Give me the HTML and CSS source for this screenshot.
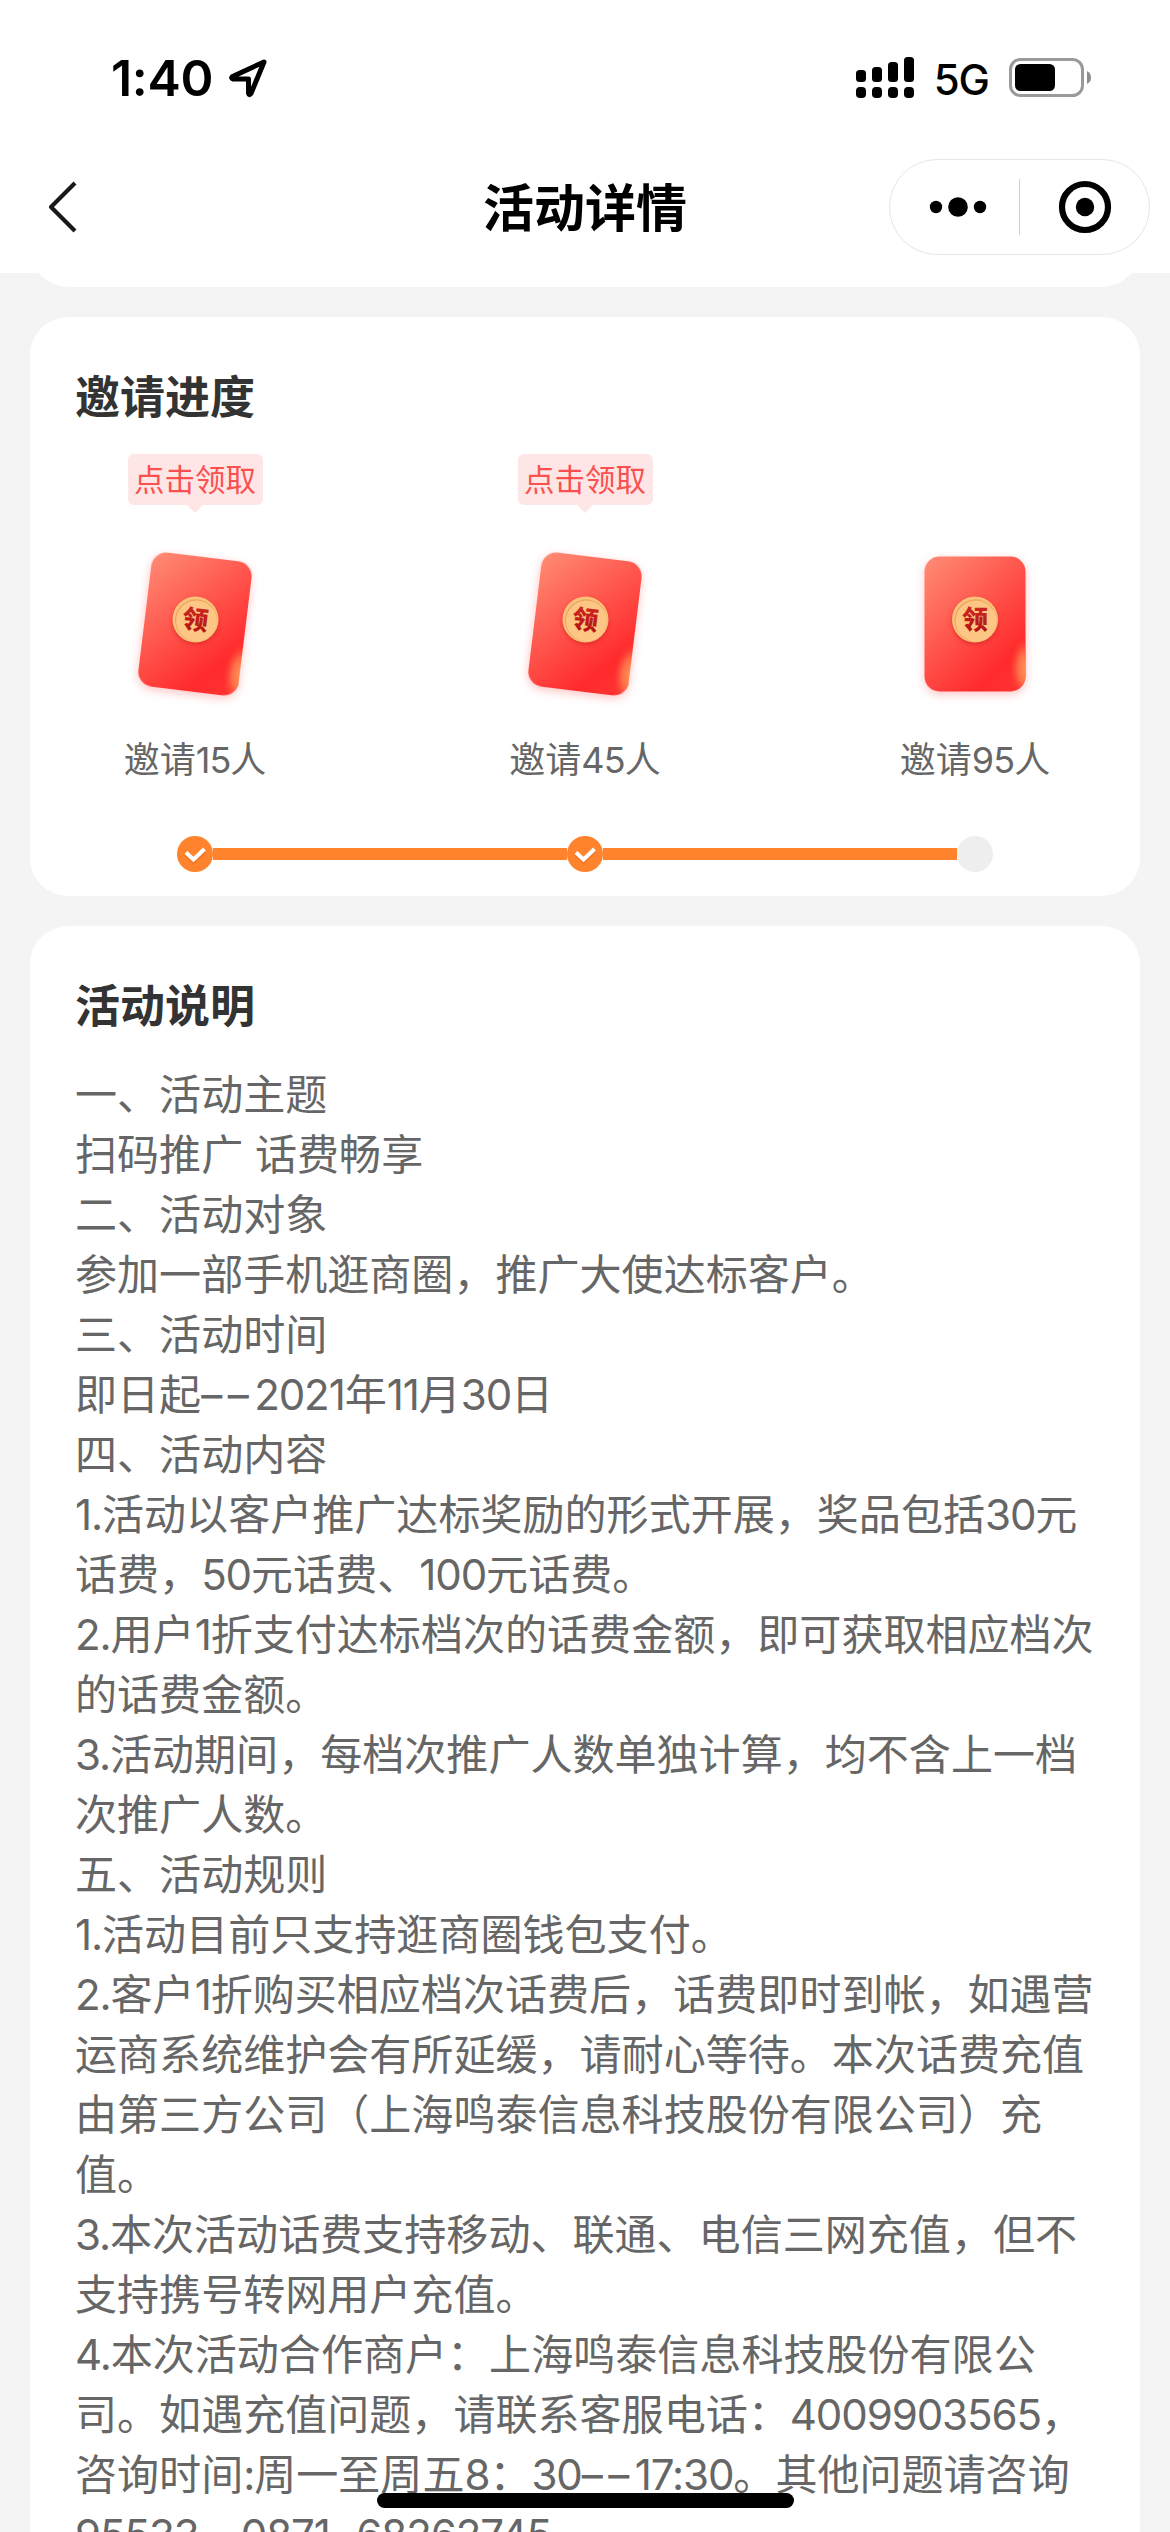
FILE: index.html
```html
<!DOCTYPE html>
<html lang="zh-CN">
<head>
<meta charset="utf-8">
<title>活动详情</title>
<link rel="stylesheet" href="styles.css">
</head>
<body>
<svg class="defs" width="0" height="0" aria-hidden="true">
  <defs>
    <linearGradient id="red" x1="0" y1="0" x2="0.75" y2="1">
      <stop offset="0" stop-color="#ff8d76"/>
      <stop offset="0.45" stop-color="#ff5a50"/>
      <stop offset="0.88" stop-color="#ff2a2c"/>
      <stop offset="1" stop-color="#ff3030"/>
    </linearGradient>
    <radialGradient id="glow" gradientUnits="userSpaceOnUse" cx="0" cy="0" r="1" gradientTransform="translate(102 112) scale(17 32)">
      <stop offset="0" stop-color="#ff9a58"/>
      <stop offset="0.5" stop-color="#ff8250" stop-opacity="0.75"/>
      <stop offset="1" stop-color="#ff4a3a" stop-opacity="0"/>
    </radialGradient>
    <linearGradient id="ink" x1="0" y1="0" x2="0" y2="1">
      <stop offset="0" stop-color="#d02a20"/>
      <stop offset="1" stop-color="#b01010"/>
    </linearGradient>
    <clipPath id="body-shape"><rect width="101" height="135" rx="15"/></clipPath>
    <g id="packet">
      <rect width="101" height="135" rx="15" fill="url(#red)"/>
      <g clip-path="url(#body-shape)"><rect x="80" y="75" width="30" height="70" fill="url(#glow)"/></g>
    </g>
    <g id="coin">
      <circle r="23" fill="#fbc27a"/>
      <circle r="21" cx="0.6" cy="0.8" fill="#e9a45e"/>
      <circle r="20.4" cx="1" cy="1.4" fill="#fdc684"/>
    </g>
  </defs>
</svg>

<div class="screen">
  <header class="header">
    <div class="status">
      <div class="clock">
        <span class="time">1:40</span>
        <svg class="location" width="40" height="40" viewBox="0 0 40 40"><path d="M36 4 4.500 18.500q-2 2 .5 2.500H20.500V35q.5 3 2.500.5z" fill="none" stroke="#000" stroke-width="5" stroke-linejoin="round"/></svg>
      </div>
      <div class="signals">
        <svg class="bars" width="59" height="42" viewBox="0 0 59 42">
          <rect x="0" y="13" width="10" height="12" rx="3.500"/><rect x="16" y="10" width="10" height="15" rx="3.500"/><rect x="32" y="5" width="10" height="20" rx="3.500"/><rect x="48" y="0" width="10" height="25" rx="3.500"/>
          <rect x="0" y="30" width="10" height="11" rx="4"/><rect x="16" y="30" width="10" height="11" rx="4"/><rect x="32" y="30" width="10" height="11" rx="4"/><rect x="48" y="30" width="10" height="11" rx="4"/>
        </svg>
        <span class="network">5G</span>
        <svg class="battery" width="82" height="40" viewBox="0 0 82 40"><rect x="1.500" y="1.500" width="72" height="36" rx="10" fill="#fff" stroke="#9a9a9a" stroke-width="3"/><rect x="6" y="6" width="40" height="27" rx="5.500"/><path d="M78 13q4 2 4 6.500T78 26z" fill="#8d8d8d"/></svg>
      </div>
    </div>
    <nav class="nav">
      <svg class="back" width="30" height="54" viewBox="0 0 30 54"><path d="M27 3 3 27 27 51" fill="none" stroke="#191919" stroke-width="4.200" stroke-linejoin="round"/></svg>
      <h1 class="nav-title">活动详情</h1>
      <div class="capsule">
        <svg class="more" width="58" height="22" viewBox="0 0 58 22"><circle cx="7" cy="11" r="6.200"/><circle cx="29" cy="11" r="9.800"/><circle cx="51" cy="11" r="6.200"/></svg>
        <i class="divider"></i>
        <svg class="close" width="54" height="54" viewBox="0 0 54 54"><circle cx="27" cy="27" r="23" fill="none" stroke="#000" stroke-width="6.200"/><circle cx="27" cy="27" r="9.200"/></svg>
      </div>
    </nav>
  </header>

  <main class="content">
    <section class="card card-previous"></section>

    <section class="card progress-card">
      <h2 class="card-title">邀请进度</h2>
      <div class="rewards">
        <div class="reward">
          <span class="tip">点击领取</span>
          <svg class="packet" width="160" height="175" viewBox="0 0 160 175"><g class="packet-body" transform="rotate(7 80 87) translate(29.500 19.500)"><use href="#packet"/></g><g class="coin" transform="translate(80.500 82.500)"><use href="#coin"/></g><text class="coin-text" x="80.500" y="92" transform="rotate(7 80 82)">领</text></svg>
          <span class="goal">邀请<b class="n">15</b>人</span>
        </div>
        <div class="reward">
          <span class="tip">点击领取</span>
          <svg class="packet" width="160" height="175" viewBox="0 0 160 175"><g class="packet-body" transform="rotate(7 80 87) translate(29.500 19.500)"><use href="#packet"/></g><g class="coin" transform="translate(80.500 82.500)"><use href="#coin"/></g><text class="coin-text" x="80.500" y="92" transform="rotate(7 80 82)">领</text></svg>
          <span class="goal">邀请<b class="n">45</b>人</span>
        </div>
        <div class="reward">
          <svg class="packet" width="160" height="175" viewBox="0 0 160 175"><g class="packet-body" transform="translate(29.500 19.500)"><use href="#packet"/></g><g class="coin" transform="translate(80 82.500)"><use href="#coin"/></g><text class="coin-text" x="80" y="92">领</text></svg>
          <span class="goal">邀请<b class="n">95</b>人</span>
        </div>
      </div>
      <div class="track">
        <svg class="node" width="36" height="36" viewBox="0 0 36 36"><circle cx="18" cy="18" r="18" fill="#ff832c"/><path d="M9 17 16.500 24 27.500 13.500" fill="none" stroke="#d9641a" stroke-opacity=".45" stroke-width="4" transform="translate(0 1.500)"/><path d="M9 16.500 16.500 23.500 27.500 13" fill="none" stroke="#fff" stroke-width="4"/></svg>
        <i class="line"></i>
        <svg class="node" width="36" height="36" viewBox="0 0 36 36"><circle cx="18" cy="18" r="18" fill="#ff832c"/><path d="M9 17 16.500 24 27.500 13.500" fill="none" stroke="#d9641a" stroke-opacity=".45" stroke-width="4" transform="translate(0 1.500)"/><path d="M9 16.500 16.500 23.500 27.500 13" fill="none" stroke="#fff" stroke-width="4"/></svg>
        <i class="line"></i>
        <i class="node node-empty"></i>
      </div>
    </section>

    <section class="card rules-card">
      <h2 class="card-title">活动说明</h2>
      <div class="rules">
        <p>一、活动主题</p>
        <p>扫码推广 话费畅享</p>
        <p>二、活动对象</p>
        <p>参加一部手机逛商圈，推广大使达标客户。</p>
        <p>三、活动时间</p>
        <p>即日起<b class="n"><span class="dash">––</span>2021</b>年<b class="n">11</b>月<b class="n">30</b>日</p>
        <p>四、活动内容</p>
        <p><b class="n">1.</b>活动以客户推广达标奖励的形式开展，奖品包括<b class="n">30</b>元<br>话费，<b class="n">50</b>元话费、<b class="n">100</b>元话费。</p>
        <p><b class="n">2.</b>用户<b class="n">1</b>折支付达标档次的话费金额，即可获取相应档次<br>的话费金额。</p>
        <p><b class="n">3.</b>活动期间，每档次推广人数单独计算，均不含上一档<br>次推广人数。</p>
        <p>五、活动规则</p>
        <p><b class="n">1.</b>活动目前只支持逛商圈钱包支付。</p>
        <p><b class="n">2.</b>客户<b class="n">1</b>折购买相应档次话费后，话费即时到帐，如遇营<br>运商系统维护会有所延缓，请耐心等待。本次话费充值<br>由第三方公司（上海鸣泰信息科技股份有限公司）充<br>值。</p>
        <p><b class="n">3.</b>本次活动话费支持移动、联通、电信三网充值，但不<br>支持携号转网用户充值。</p>
        <p><b class="n">4.</b>本次活动合作商户：上海鸣泰信息科技股份有限公<br>司。如遇充值问题，请联系客服电话：<b class="n">4009903565</b>，<br>咨询时间<b class="n">:</b>周一至周五<b class="n">8</b>：<b class="n">30<span class="dash">––</span>17:30</b>。其他问题请咨询<br><b class="n">95533</b>，<b class="n">0871<span class="dash">–</span>68262745</b></p>
      </div>
    </section>
  </main>
  <div class="home-indicator"></div>
</div>
</body>
</html>
```
FILE: styles.css
```css
* {
  box-sizing: border-box;
}

body {
  margin: 0;
  font-family: Inter, "Noto Sans CJK SC", sans-serif;
  background: #f4f4f4;
}

h1, h2, p {
  margin: 0;
}

svg {
  display: block;
}

.defs {
  position: absolute;
}

.screen {
  position: relative;
  width: 1170px;
  height: 2532px;
  overflow: hidden;
  background: #f4f4f4;
}

.header {
  height: 273px;
  padding-top: 48px;
  background: #fff;
}

/* Status bar */
.status {
  display: flex;
  justify-content: space-between;
  height: 60px;
  padding: 0 79px 0 111px;
}

.clock, .signals {
  display: flex;
  align-items: center;
}

.clock {
  gap: 15px;
}

.time {
  font-size: 50px;
  font-weight: 600;
  line-height: 60px;
  letter-spacing: -0.3px;
}

.signals {
  gap: 20px;
}

.bars {
  margin-right: -1px;
}

.network {
  padding-top: 3px;
  font-size: 42px;
  font-weight: 450;
  line-height: 60px;
  letter-spacing: -1px;
}

/* Navigation bar */
.nav {
  display: grid;
  grid-template-columns: 281px 1fr 261px;
  align-items: center;
  height: 96px;
  margin-top: 51px;
  padding: 0 20px 0 0;
}

.back {
  margin-left: 48px;
}

.nav-title {
  padding-top: 3px;
  font-size: 51px;
  font-weight: 700;
  line-height: 60px;
  text-align: center;
}

.capsule {
  display: flex;
  align-items: center;
  height: 96px;
  border: 1px solid #e6e6e6;
  border-radius: 48px;
}

.more {
  margin-left: 39px;
}

.divider {
  width: 1px;
  height: 56px;
  margin: 0 38px 0 32px;
  background: #d0d0d0;
}

/* Cards */
.content {
  display: flex;
  flex-direction: column;
  gap: 30px;
  height: 2259px;
  padding: 0 30px;
  overflow: hidden;
}

.card {
  flex: none;
  padding: 51px 46px 0;
  border-radius: 38px;
  background: #fff;
}

.card-previous {
  height: 52px;
  margin-top: -38px;
  padding: 0;
  border-radius: 0 0 38px 38px;
}

.progress-card {
  height: 579px;
}

.card-title {
  margin-left: -1px;
  font-size: 45px;
  font-weight: 700;
  line-height: 60px;
  color: #333;
}

.rewards {
  display: flex;
  justify-content: space-between;
  height: 357px;
  padding: 0 14px;
}

.reward {
  display: flex;
  flex-direction: column;
  justify-content: flex-end;
  align-items: center;
  width: 210px;
}

.tip {
  position: relative;
  width: 135px;
  height: 51px;
  border-radius: 6px;
  background: #ffe6e6;
  color: #fb5050;
  font-size: 30.500px;
  line-height: 51px;
  text-align: center;
  white-space: nowrap;
}

.tip::after {
  content: "";
  position: absolute;
  top: 51px;
  left: 59px;
  border: 8px solid transparent;
  border-top-color: #ffe6e6;
  border-bottom: 0;
}

.packet {
  margin-top: 32px;
}

.packet-body {
  filter: drop-shadow(0 3px 5px rgba(255, 60, 60, 0.3));
}

.coin {
  filter: drop-shadow(0 2px 2px rgba(190, 20, 20, 0.45));
}

.coin-text {
  font-size: 26px;
  font-weight: 900;
  text-anchor: middle;
  fill: url(#ink);
}

.goal {
  margin-top: 23px;
  font-size: 36px;
  line-height: 50px;
  color: #666;
}

.n {
  font-weight: 400;
  letter-spacing: -0.026em;
}

.dash {
  letter-spacing: 0.13em;
}

.track {
  display: flex;
  align-items: center;
  width: 816px;
  height: 36px;
  margin: 51px 0 0 101px;
}

.node {
  flex: none;
  width: 36px;
  height: 36px;
}

.node-empty {
  border-radius: 50%;
  background: #eee;
}

.line {
  flex: 1;
  height: 12px;
  background: #ff832c;
}

.rules {
  margin-left: -1px;
  padding-top: 28px;
  font-size: 42.050px;
  line-height: 60px;
  color: #666;
  white-space: nowrap;
  text-spacing-trim: space-all;
}

.rules-card {
  height: 1700px;
}

.home-indicator {
  position: absolute;
  left: 377px;
  top: 2493px;
  width: 417px;
  height: 15px;
  border-radius: 8px;
  background: #000;
}
```
